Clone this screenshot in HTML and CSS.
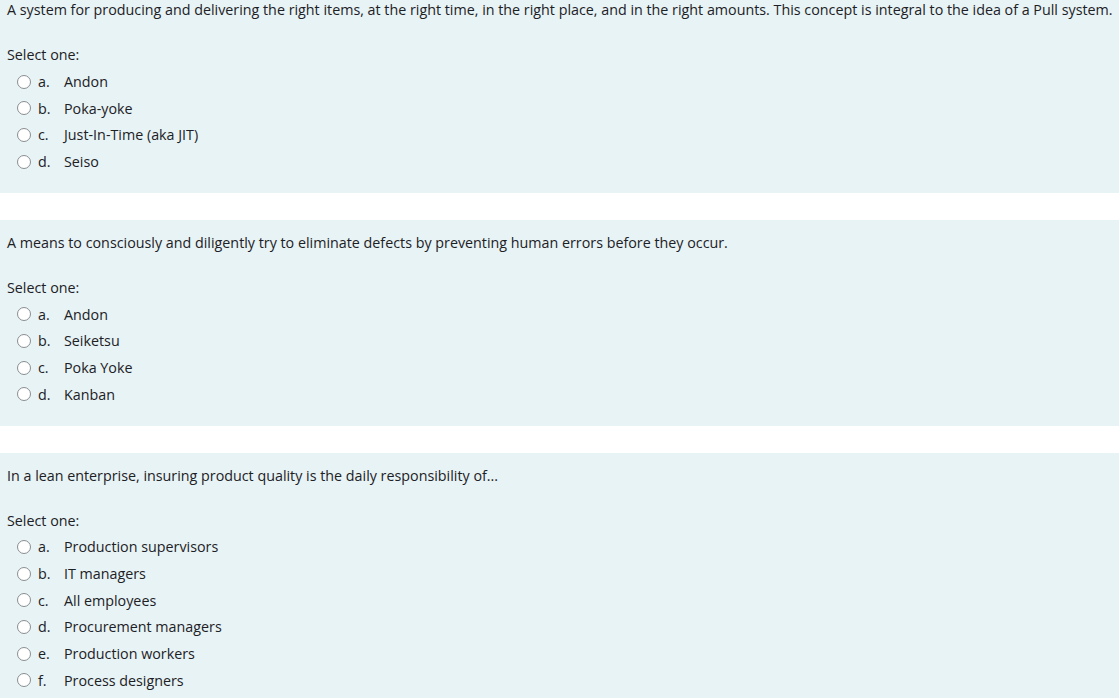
FILE: index.html
```html
<!DOCTYPE html>
<html>
<head>
<meta charset="utf-8">
<link rel="stylesheet" href="styles.css">
</head>
<body>
<div class="page">
  <div class="que que-first">
    <div class="qtext">A system for producing and delivering the right items, at the right time, in the right place, and in the right amounts. This concept is integral to the idea of a Pull system.</div>
    <div class="prompt">Select one:</div>
    <div class="answer">
      <label class="opt"><span class="radio"></span><span class="letter">a.</span><span class="atext">Andon</span></label>
      <label class="opt"><span class="radio"></span><span class="letter">b.</span><span class="atext">Poka-yoke</span></label>
      <label class="opt"><span class="radio"></span><span class="letter">c.</span><span class="atext">Just-In-Time (aka JIT)</span></label>
      <label class="opt"><span class="radio"></span><span class="letter">d.</span><span class="atext">Seiso</span></label>
    </div>
  </div>
  <div class="que">
    <div class="qtext">A means to consciously and diligently try to eliminate defects by preventing human errors before they occur.</div>
    <div class="prompt">Select one:</div>
    <div class="answer">
      <label class="opt"><span class="radio"></span><span class="letter">a.</span><span class="atext">Andon</span></label>
      <label class="opt"><span class="radio"></span><span class="letter">b.</span><span class="atext">Seiketsu</span></label>
      <label class="opt"><span class="radio"></span><span class="letter">c.</span><span class="atext">Poka Yoke</span></label>
      <label class="opt"><span class="radio"></span><span class="letter">d.</span><span class="atext">Kanban</span></label>
    </div>
  </div>
  <div class="que">
    <div class="qtext">In a lean enterprise, insuring product quality is the daily responsibility of...</div>
    <div class="prompt">Select one:</div>
    <div class="answer">
      <label class="opt"><span class="radio"></span><span class="letter">a.</span><span class="atext">Production supervisors</span></label>
      <label class="opt"><span class="radio"></span><span class="letter">b.</span><span class="atext">IT managers</span></label>
      <label class="opt"><span class="radio"></span><span class="letter">c.</span><span class="atext">All employees</span></label>
      <label class="opt"><span class="radio"></span><span class="letter">d.</span><span class="atext">Procurement managers</span></label>
      <label class="opt"><span class="radio"></span><span class="letter">e.</span><span class="atext">Production workers</span></label>
      <label class="opt"><span class="radio"></span><span class="letter">f.</span><span class="atext">Process designers</span></label>
    </div>
  </div>
</div>
</body>
</html>
```
FILE: styles.css
```css
html, body {
  margin: 0;
  padding: 0;
  background: #ffffff;
}
body {
  font-family: "Open Sans", "Noto Sans", sans-serif;
  font-size: 14.3px;
  color: #1d2125;
  overflow: hidden;
}
.page {
  display: flex;
  flex-direction: column;
  gap: 27px;
}
.que {
  background: #e7f3f5;
  padding: 12px 0 18px 7px;
}
.que-first {
  margin-top: -12.2px;
  padding-top: 11.5px;
}
.qtext {
  line-height: 22px;
  white-space: nowrap;
}
.prompt {
  margin-top: 21px;
  line-height: 26px;
}
.answer {
  display: flex;
  flex-direction: column;
}
.opt {
  display: flex;
  align-items: center;
  height: 26.67px;
}
.radio {
  box-sizing: border-box;
  width: 14px;
  height: 14px;
  border: 1px solid #8a8d90;
  border-radius: 50%;
  background: #ffffff;
  margin-left: 10px;
  margin-right: 7px;
  flex: none;
}
.letter {
  width: 26px;
  flex: none;
}
.atext {
  white-space: nowrap;
}
```
